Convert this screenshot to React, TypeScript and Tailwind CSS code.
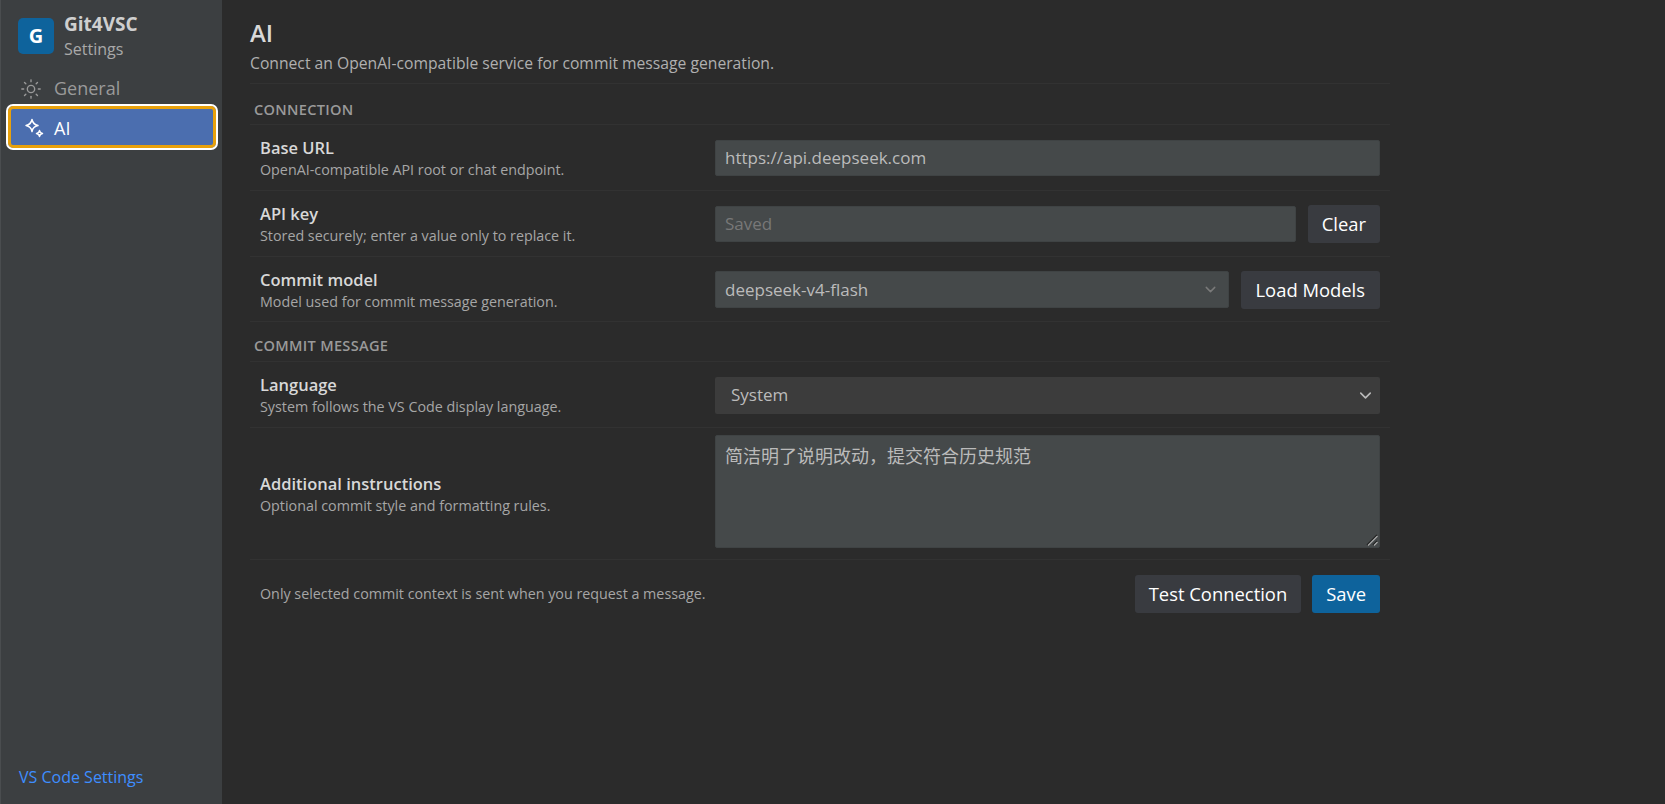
import { ChevronDown, Sun } from "lucide-react";

const font = "font-['Open_Sans','Noto_Sans_CJK_SC',sans-serif]";

function Sparkles() {
  return (
    <svg width="22" height="22" viewBox="0 0 22 22" fill="none" stroke="currentColor" strokeWidth="1.5" strokeLinejoin="round">
      <path d="M9 2.5c.7 3.6 2.4 5.3 6 6-3.6.7-5.3 2.4-6 6-.7-3.6-2.4-5.3-6-6 3.6-.7 5.3-2.4 6-6z" />
      <path d="M16.5 13.5c.3 1.9 1.1 2.7 3 3-1.9.3-2.7 1.1-3 3-.3-1.9-1.1-2.7-3-3 1.9-.3 2.7-1.1 3-3z" />
    </svg>
  );
}

function Label({ title, hint }: { title: string; hint: string }) {
  return (
    <div className="w-[455px] shrink-0 pt-[2px]">
      <div className="text-[16.5px] leading-[22px] font-semibold text-[#d8d8d8]">{title}</div>
      <div className="text-[14.3px] leading-[21px] text-[#a6a6a6]">{hint}</div>
    </div>
  );
}

function Row({ title, hint, className, children }: { title: string; hint: string; className?: string; children: React.ReactNode }) {
  return (
    <div className={`flex items-center pl-[10px] pr-[10px] border-b border-[#323232] ${className ?? "h-[66px]"}`}>
      <Label title={title} hint={hint} />
      <div className="flex-1 flex items-center gap-[12px] mt-[1px]">{children}</div>
    </div>
  );
}

function Btn({ children, className }: { children: React.ReactNode; className?: string }) {
  return (
    <button className={`h-[38px] pt-[1px] rounded-[3px] bg-[#393b40] text-white text-[18.4px] leading-none ${className ?? "px-[14px]"}`}>
      {children}
    </button>
  );
}

function Section({ className, children }: { className: string; children: React.ReactNode }) {
  return (
    <div className={`flex items-center pl-[4px] border-b border-[#323232] text-[14.6px] font-semibold tracking-[0.02em] text-[#9a9a9a] ${className}`}>
      {children}
    </div>
  );
}

export default function App() {
  return (
    <div className={`h-screen flex bg-[#2b2b2b] overflow-hidden ${font}`}>
      <aside className="w-[222px] shrink-0 flex flex-col bg-[#3c3f41] border-l border-[#4a4d4f] pl-[7px] pr-[6px]">
        <div className="flex items-center gap-[10px] pl-[10px] pt-[13px] pb-[7px]">
          <div className="w-[36px] h-[36px] rounded-[5px] bg-[#0e639c] flex items-center justify-center text-white text-[20px] font-bold">G</div>
          <div>
            <div className="text-[19px] leading-[23px] font-bold text-[#cfcfcf]">Git4VSC</div>
            <div className="text-[16px] leading-[23px] pt-[2px] mb-[-2px] text-[#a9a9a9]">Settings</div>
          </div>
        </div>
        <div className="h-[41px] pt-[4px] flex items-center gap-[12px] pl-[12px] text-[#9a9a9a] text-[18px]">
          <Sun size={22} strokeWidth={1.5} />
          General
        </div>
        <div className="mt-[-1px] h-[42px] pt-[2px] flex items-center gap-[9px] pl-[12px] rounded-[5px] bg-[#4b6eaf] border-[3px] border-[#e8a10c] outline-2 outline-white text-white text-[18px]">
          <Sparkles />
          AI
        </div>
        <a className="mt-auto mb-[15px] ml-[11px] text-[16px] text-[#3e8eff]">VS Code Settings</a>
      </aside>
      <main className="w-[1140px] ml-[28px]">
        <h1 className="pt-[18px] text-[24px] leading-[30px] font-semibold text-[#d8d8d8]">AI</h1>
        <p className="mt-[3px] h-[33px] pt-[1px] text-[15.7px] leading-[22px] text-[#b0b0b0] border-b border-[#323232]">
          Connect an OpenAI-compatible service for commit message generation.
        </p>
        <Section className="h-[41px] pt-[11px]">CONNECTION</Section>
        <Row title="Base URL" hint="OpenAI-compatible API root or chat endpoint.">
          <div className="flex-1 h-[36px] flex items-center px-[9px] rounded-[2px] bg-[#45494a] border border-[#3f4344] text-[17px] text-[#bbbbbb]">https://api.deepseek.com</div>
        </Row>
        <Row title="API key" hint="Stored securely; enter a value only to replace it.">
          <div className="flex-1 h-[36px] flex items-center px-[9px] rounded-[2px] bg-[#45494a] border border-[#3f4344] text-[17px] text-[#787878]">Saved</div>
          <Btn className="px-[14px]">Clear</Btn>
        </Row>
        <Row title="Commit model" hint="Model used for commit message generation." className="h-[65px]">
          <div className="flex-1 h-[37px] flex items-center justify-between px-[9px] rounded-[2px] bg-[#45494a] border border-[#3f4344] text-[17px] text-[#bbbbbb]">
            deepseek-v4-flash
            <ChevronDown size={17} className="text-[#7a7a7a]" />
          </div>
          <Btn className="px-[15px]">Load Models</Btn>
        </Row>
        <Section className="h-[40px] pt-[9px]">COMMIT MESSAGE</Section>
        <Row title="Language" hint="System follows the VS Code display language.">
          <div className="flex-1 h-[37px] flex items-center justify-between pl-[16px] pr-[5px] rounded-[2px] bg-[#3c3c3c] text-[17px] text-[#bbbbbb]">
            System
            <ChevronDown size={19} className="text-[#bbbbbb]" />
          </div>
        </Row>
        <Row title="Additional instructions" hint="Optional commit style and formatting rules." className="h-[132px]">
          <div className="flex-1 mb-[5px] relative h-[113px] px-[9px] py-[6px] rounded-[2px] bg-[#45494a] border border-[#3f4344] text-[18px] leading-[28px] text-[#bbbbbb]">
            简洁明了说明改动，提交符合历史规范
            <svg className="absolute right-[1px] bottom-[1px]" width="12" height="12" viewBox="0 0 12 12" fill="none" strokeWidth="1.2">
              <path d="M1 11 11 1" stroke="#1c1c1c" />
              <path d="M2 11.5 11.5 2" stroke="#a8a8a8" />
              <path d="M7 11 11 7" stroke="#1c1c1c" />
              <path d="M8 11.5 11.5 8" stroke="#a8a8a8" />
            </svg>
          </div>
        </Row>
        <div className="mt-[15px] flex items-center pl-[10px] pr-[10px]">
          <span className="text-[14.3px] text-[#a6a6a6]">Only selected commit context is sent when you request a message.</span>
          <div className="ml-auto flex gap-[11px]">
            <Btn>Test Connection</Btn>
            <Btn className="px-[14px] !bg-[#0e639c]">Save</Btn>
          </div>
        </div>
      </main>
    </div>
  );
}
